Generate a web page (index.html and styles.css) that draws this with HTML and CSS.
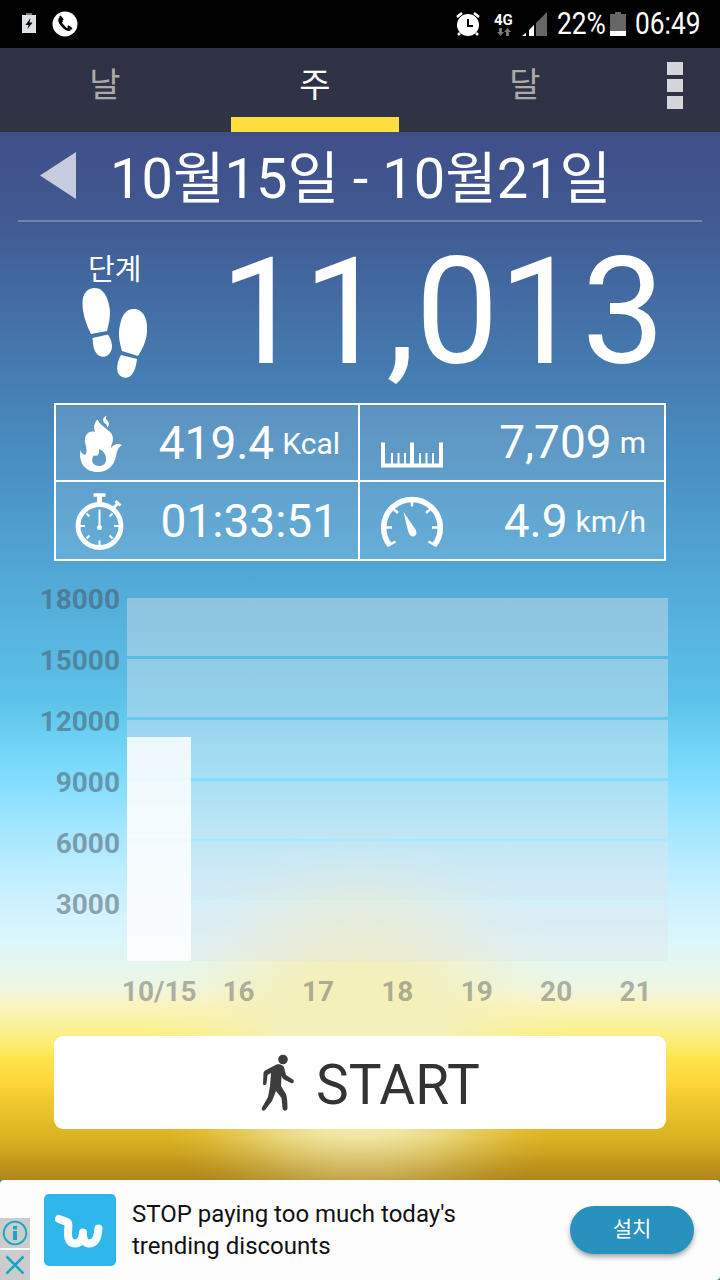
FILE: index.html
```html
<!DOCTYPE html>
<html lang="ko">
<head>
  <meta charset="utf-8">
  <meta name="viewport" content="width=device-width, initial-scale=1">
  <title>만보기</title>
  <link rel="stylesheet" href="styles.css">
</head>
<body>
  <div class="status-bar">
    <svg class="battery-charge" width="14" height="22" viewBox="0 0 14 22">
      <path d="M4 0h6v2H4z" fill="#777"/>
      <path d="M0 2h14v18H0z" fill="#dde1e3"/>
      <path d="M8.500 5L3.500 12h3L5.500 16L10.500 9.500H7.500z" fill="#000"/>
    </svg>
    <svg class="call" width="26" height="26" viewBox="0 0 26 26">
      <circle cx="13" cy="13" r="12.500" fill="#fff"/>
      <path d="M8 6C5 8 6 12 10 16C14 20 17 21 19 19L16.500 16L14.500 17L10 12L11 10L9 6z" fill="#000"/>
      <path d="M8 5l3 4M16 15l4 3" stroke="#000" stroke-width="2"/>
    </svg>
    <div class="status-right">
      <svg width="24" height="25" viewBox="0 0 24 25">
        <circle cx="12" cy="13" r="11" fill="#fff"/>
        <path d="M1 5l5-4M23 5l-5-4M4 21l-2 2M20 21l2 2" stroke="#fff" stroke-width="2.500"/>
        <path d="M12 7v7h5" stroke="#000" stroke-width="2" fill="none"/>
      </svg>
      <div class="network">
        <span>4G</span>
        <svg width="14" height="8" viewBox="0 0 14 8">
          <path d="M2 0h3v4h2L3.500 8L0 4h2zM9 8h3V4h2L10.500 0L7 4h2z" fill="#777"/>
        </svg>
      </div>
      <svg class="signal" width="25" height="24" viewBox="0 0 25 24">
        <path d="M25 0v24H14V11z" fill="#666"/>
        <path d="M12 13v11H7v-6zM5 20v4H0z" fill="#fff"/>
        <path d="M4.500 19v5M6 18v6" stroke="#000"/>
      </svg>
      <div class="percent"><span>22%</span></div>
      <svg class="battery" width="16" height="24" viewBox="0 0 16 24">
        <path d="M5 0h6v2h5v17H0V2h5z" fill="#666"/>
        <path d="M0 19h16v5H0z" fill="#fff"/>
      </svg>
      <div class="clock"><span>06:49</span></div>
    </div>
  </div>

  <div class="tabs">
    <div class="tab">날</div>
    <div class="tab active">주</div>
    <div class="tab">달</div>
    <div class="menu"><i></i><i></i><i></i></div>
  </div>

  <div class="main">
    <div class="date">
      <svg class="prev" width="36" height="48" viewBox="0 0 36 48"><path d="M0 23.500L36 0v47z" fill="#fff" fill-opacity=".7"/></svg>
      <span>10월15일 - 10월21일</span>
    </div>

    <div class="steps">
      <div class="steps-label">
        <span>단계</span>
        <svg width="66" height="90" viewBox="0 0 66 90" fill="#fff">
          <path d="M9 46C5 38 .500 27 .500 15C.500 6 5 0 13 0C22 0 27 11 28 24C28 32 26 39 25 43z"/>
          <path d="M10.500 50L26 46.500C30 53 31 59 29 63C27 68 22 70 17.500 68C12 65 11 58 10.500 50z"/>
          <path d="M40 63C37 53 36 45 38 37C40 27 44 21 52 21C61 21 66 31 65 43C65 52 60 62 56 68z"/>
          <path d="M39 67L55 71C54 79 52 86 47 89C43 91 38 89 36 85C34 79 36 72 39 67z"/>
        </svg>
      </div>
      <div class="steps-count">11,013</div>
    </div>

    <div class="stats">
      <div class="stat">
        <svg width="62" height="60" viewBox="0 0 62 60" fill="#fff">
          <path fill-rule="evenodd" d="M20.500 6.500C17 10 16.500 14 18 19C12 17 7 22 8 29C9 34 11 39 8 42C5 41 4 39 3.500 37C1 50 9 59 20 59C31 59 37 53 39 43C40 37 42 34 45 32C41 30 37 31 34 35C34 31 37 29 35.500 23C34 17 25 15 20.500 6.500zM22 36C27 38 29 42 29 46C29 51 26 53 22 53C17 53 14 49 15.500 45C16 43 17 42 19 43C22 42 22.500 39 22 36z"/>
          <path d="M29.500 2.500C25 5 25.500 8.500 28 10.500C30 11.500 30 13 30 14.500C33 12 32 8.500 30 7.500C28.500 6 29 4.500 29.500 2.500z"/>
        </svg>
        <div class="value">419.4<small>Kcal</small></div>
      </div>
      <div class="stat distance">
        <svg width="62" height="60" viewBox="0 0 62 60">
          <path d="M2 29.500v23h58v-23M31 29.500v23" fill="none" stroke="#fff" stroke-width="4"/>
          <path d="M11 40v12M17.500 40v12M24 40v12M39 40v12M45.500 40v12M52 40v12" stroke="#fff" stroke-width="2"/>
        </svg>
        <div class="value">7,709<small>m</small></div>
      </div>
      <div class="stat time">
        <svg width="62" height="60" viewBox="0 0 62 60" fill="none" stroke="#fff">
          <circle cx="22.500" cy="35" r="21.500" stroke-width="4.800"/>
          <path d="M16.500 4h12" stroke-width="3.500"/>
          <path d="M22.500 5v8" stroke-width="5"/>
          <path d="M37 16.500l4.500-5M38.500 10l5 4.500" stroke-width="3"/>
          <path d="M22.500 49.500v5M3 35h5M37 35h5M9.500 22.500l3 3M35.500 22.500l-3 3M9.500 47.500l3-3M35.500 47.500l-3-3M22.500 18.500v16" stroke-width="2"/>
          <circle cx="22.500" cy="36.500" r="2.500" fill="#fff" stroke="none"/>
        </svg>
        <div class="value">01:33:51</div>
      </div>
      <div class="stat speed">
        <svg width="62" height="60" viewBox="0 0 62 60">
          <path d="M9 54.500A28.300 28.300 0 1 1 53 54.500" fill="none" stroke="#fff" stroke-width="5.500"/>
          <path d="M7.500 54.500l7-4M54.500 54.500l-7-4M4 36.500h7M58 36.500h-7M31 9v6.500M12 17.500l5 4.500M50 17.500l-5 4.500" stroke="#fff" stroke-width="2.500"/>
          <path d="M22.500 21L34.500 38.500C36.500 42 35 45.500 32 45.500C29.500 45.500 28 43.500 27 40z" fill="#fff"/>
        </svg>
        <div class="value">4.9<small>km/h</small></div>
      </div>
    </div>

    <div class="chart">
      <div class="y-axis">
        <span>18000</span>
        <span>15000</span>
        <span>12000</span>
        <span>9000</span>
        <span>6000</span>
        <span>3000</span>
      </div>
      <div class="plot">
        <div class="bands"><i></i><i></i><i></i><i></i><i></i><i></i></div>
        <div class="bar" style="height: 61.8%"></div>
      </div>
    </div>
    <div class="x-axis">
      <span>10/15</span>
      <span>16</span>
      <span>17</span>
      <span>18</span>
      <span>19</span>
      <span>20</span>
      <span>21</span>
    </div>

    <div class="start">
      <svg width="34" height="56" viewBox="0 0 34 56" fill="#3d3d3d">
        <circle cx="22" cy="4.500" r="4.800"/>
        <path d="M15.500 9.500C19 8.500 23 10.500 23.500 14L25 20L32 24.500C34 26.500 32 29 30 28L22 24L20.500 21L20 31L25 39C26 42 26.500 48 26.500 53C26.500 56.500 21.500 56.500 21.500 53L20.500 43L15 36L11 46L4.500 54.500C2 57 0 55 1 52.500L7 42L9 31L10 18L6.500 20L5.500 28.500C5 30.500 2 30.500 2 28.500L2.500 18C3 16 4 15.500 5 15z"/>
      </svg>
      <span>START</span>
    </div>
  </div>

  <div class="ad">
    <div class="ad-inner">
      <div class="ad-choices">
        <div class="choice">
          <svg width="30" height="30" viewBox="0 0 30 30">
            <circle cx="15" cy="15" r="11.300" fill="none" stroke="#12a9c5" stroke-width="1.800"/>
            <path d="M13 13h4v9h-4zM13 8h4v3.500h-4z" fill="#12a9c5"/>
          </svg>
        </div>
        <div class="choice">
          <svg width="30" height="30" viewBox="0 0 30 30">
            <path d="M6.500 6.500l17 17M23.500 6.500l-17 17" stroke="#12a9c5" stroke-width="2.500"/>
          </svg>
        </div>
      </div>
      <svg class="wish" width="72" height="72" viewBox="0 0 72 72">
        <rect width="72" height="72" rx="5" fill="#2fb7ec"/>
        <path d="M15 25L23 28C25.500 29.500 24 34 24 40C24 46.500 27 49.500 31 49.500C36.500 49.500 38.500 45 39 38.500C38.500 46 41 49.500 45 49.500C52 49.500 54 43 54.500 34.500" fill="none" stroke="#fff" stroke-width="8" stroke-linecap="round" stroke-linejoin="round"/>
      </svg>
      <div class="ad-text">STOP paying too much today's<br>trending discounts</div>
      <div class="install">설치</div>
    </div>
  </div>
</body>
</html>
```

FILE: styles.css
```css
* {
  box-sizing: border-box;
}

body {
  margin: 0;
  width: 720px;
  height: 1280px;
  overflow: hidden;
  font-family: Roboto, "Noto Sans CJK KR", sans-serif;
  color: #fff;
}

svg {
  display: block;
  flex: none;
  overflow: visible;
}

/* status bar */
.status-bar {
  display: flex;
  align-items: center;
  height: 48px;
  padding: 0 18px 0 22px;
  background: #000;
}

.call {
  margin-left: 16px;
}

.status-right {
  display: flex;
  align-items: center;
  margin-left: auto;
  font-size: 31px;
  line-height: 48px;
}

.network {
  width: 20px;
  margin-left: 14px;
  font-size: 15px;
  font-weight: 700;
  line-height: 14px;
}

.network svg {
  margin: 1px 0 0 3px;
}

.signal {
  margin-left: 8px;
}

.percent {
  width: 48px;
  margin-left: 10px;
}

.percent span,
.clock span {
  display: inline-block;
  transform: scaleX(.85);
  transform-origin: left;
}

.battery {
  margin-left: 5px;
}

.clock {
  width: 67px;
  margin-left: 9px;
}

/* tabs */
.tabs {
  display: flex;
  height: 84px;
  background: linear-gradient(#2f3145, #303445);
}

.tab {
  display: flex;
  flex-direction: column;
  width: 210px;
  height: 84px;
  padding-top: 2px;
  font-size: 34px;
  line-height: 70px;
  text-align: center;
  color: #aaa;
}

.tab.active {
  color: #fff;
}

.tab.active::after {
  content: "";
  flex: none;
  height: 15px;
  margin: -3px 21px 0;
  background: #ffde3e;
}

.menu {
  display: flex;
  flex-direction: column;
  gap: 4px;
  padding: 14px 0 0 37px;
}

.menu i {
  width: 16px;
  height: 13px;
  background: #d5d6db;
}

/* main */
.main {
  height: 1048px;
  background:
    linear-gradient(rgba(160, 120, 30, 0) 1005px, rgba(160, 120, 30, .3) 1048px),
    radial-gradient(circle 215px at 360px 908px, rgba(244, 240, 188, 1) 0, rgba(244, 240, 188, 1) 34%, rgba(244, 240, 188, .82) 46%, rgba(244, 240, 188, .55) 60%, rgba(244, 240, 188, .27) 74%, rgba(244, 240, 188, .08) 88%, rgba(244, 240, 188, 0) 100%),
    linear-gradient(#404e88 0, #415a93 90px, #436ca4 168px, #4682b6 268px, #50a4d4 428px, #54aeda 470px, #5cc2e9 568px, #6dd2f4 608px, #80dcfe 645px, #a6e7ff 700px, #cdf1ff 768px, #daf6fc 805px, #e4f6f0 830px, #eff6e2 856px, #faf4c4 870px, #fbf29e 892px, #fbec6a 914px, #fde54c 926px, #fed63a 950px, #f0c82e 970px, #deb624 1000px, #d4aa20 1020px, #b68b17 1048px);
}

.date {
  display: flex;
  align-items: center;
  height: 90px;
  margin: 0 18px;
  padding-left: 22px;
  border-bottom: 2px solid rgba(255, 255, 255, .25);
}

.date span {
  margin-left: 34px;
  padding-top: 5px;
  font-size: 56px;
  line-height: 80px;
  white-space: nowrap;
}

.steps {
  display: flex;
  height: 181px;
}

.steps-label {
  width: 116px;
  margin-left: 82px;
  padding-top: 28px;
}

.steps-label span {
  display: block;
  height: 38px;
  margin-left: 6px;
  font-size: 29px;
  line-height: 40px;
}

.steps-count {
  width: 467px;
  font-size: 148px;
  line-height: 181px;
  text-align: right;
}

.stats {
  display: grid;
  grid-template-columns: 302px 304px;
  grid-template-rows: 75px 77px;
  gap: 2px;
  width: 612px;
  height: 158px;
  margin-left: 54px;
  border: 2px solid #fff;
  background:
    linear-gradient(#fff, #fff) 302px 0 / 2px 100% no-repeat,
    linear-gradient(#fff, #fff) 0 75px / 100% 2px no-repeat,
    rgba(255, 255, 255, .12);
}

.stat {
  display: flex;
  align-items: center;
  padding: 0 18px 0 21px;
}

.value {
  margin-left: auto;
  font-size: 46px;
  line-height: 60px;
  white-space: nowrap;
}

.distance .value {
  padding-bottom: 2px;
}

.time .value {
  padding-right: 2px;
}

.value small {
  margin-left: 8px;
  font-size: 30px;
  line-height: 1;
  vertical-align: 5px;
}

/* chart */
.chart {
  display: flex;
  margin-top: 37px;
  color: rgba(70, 80, 90, .5);
}

.y-axis {
  width: 127px;
  height: 363px;
  padding-right: 7px;
}

.y-axis span,
.x-axis span {
  display: block;
  font-size: 28px;
  font-weight: 700;
}

.y-axis span {
  height: 61px;
  line-height: 4px;
  text-align: right;
}

.plot {
  display: grid;
  width: 541px;
  height: 363px;
}

.bands {
  display: grid;
  grid-area: 1 / 1;
  grid-template-rows: repeat(6, 58px);
  gap: 3px;
}

.bands i {
  background: rgba(226, 228, 232, .41);
}

.bar {
  grid-area: 1 / 1;
  align-self: end;
  width: 64px;
  background: rgba(255, 255, 255, .83);
}

.x-axis {
  display: grid;
  grid-template-columns: repeat(7, 79.4px);
  margin-left: 119.5px;
  height: 75px;
  line-height: 62px;
  text-align: center;
  color: rgba(70, 75, 75, .42);
}

.start {
  display: flex;
  align-items: center;
  width: 612px;
  height: 93px;
  margin-left: 54px;
  padding-left: 207px;
  border-radius: 9px;
  background: #fff;
  font-size: 55px;
  color: #333;
}

.start span {
  margin-left: 21px;
  padding-top: 5px;
}

/* ad */
.ad {
  height: 100px;
  background: #1b7fa6;
}

.ad-inner {
  display: flex;
  align-items: center;
  height: 100px;
  padding-right: 26px;
  border-radius: 4px;
  background: #fdfdfd;
}

.ad-choices {
  display: flex;
  flex-direction: column;
  align-self: flex-end;
  gap: 2px;
}

.choice {
  width: 30px;
  height: 30px;
  background: #ccc;
}

.wish {
  margin-left: 14px;
}

.ad-text {
  margin-left: 16px;
  font-size: 24px;
  line-height: 32px;
  color: #111;
}

.install {
  width: 124px;
  height: 48px;
  margin-left: auto;
  border-radius: 24px;
  background: #2991bd;
  box-shadow: 0 3px 5px rgba(0, 0, 0, .35);
  font-size: 21px;
  line-height: 47px;
  text-align: center;
}
```
